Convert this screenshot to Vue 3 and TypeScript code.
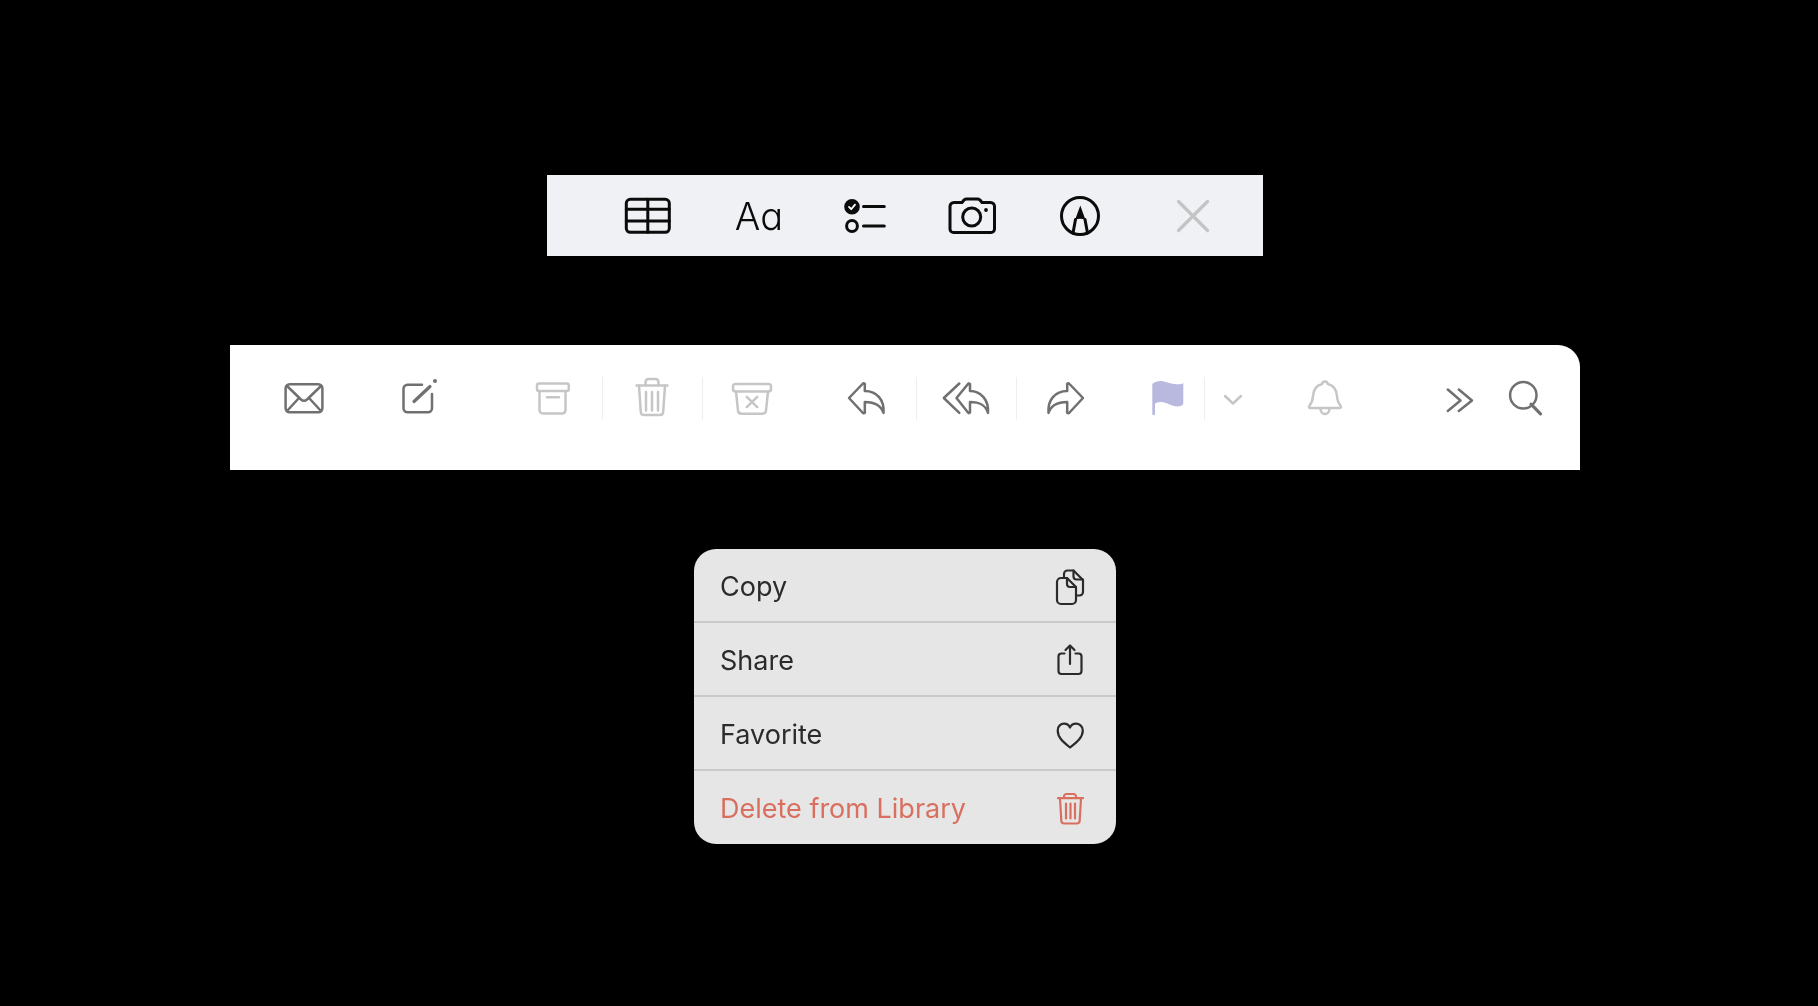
<template>
  <div class="page">
    <div class="note-bar">
      <button class="note-btn first">
        <svg width="48" height="48" viewBox="0 0 48 48" class="line dark-black">
          <rect x="2.3" y="7.3" width="43" height="33" rx="4" />
          <path d="M2.3 17.3H45.3M2.3 29H45.3M23.8 7.3V40.3" />
        </svg>
      </button>
      <button class="note-btn aa">Aa</button>
      <button class="note-btn check">
        <svg width="48" height="48" viewBox="0 0 48 48" class="line dark-black">
          <circle cx="11" cy="14.8" r="6.3" class="black-fill" />
          <path d="M8 14.9l2.2 2.3 3.8-4.6" class="white-stroke" />
          <circle cx="11" cy="34" r="5.4" />
          <path d="M22.5 14.5H43.3M22.5 34H43.3" />
        </svg>
      </button>
      <button class="note-btn cam">
        <svg width="48" height="48" viewBox="0 0 48 48" class="line dark-black">
          <path d="M6 10.5H14L16 8Q17 7 19 7H29Q31 7 32 8L34 10.5H42.5a4 4 0 0 1 4 4V37a3.5 3.5 0 0 1-3.5 3.5H5.5A3.5 3.5 0 0 1 2 37V14.5a4 4 0 0 1 4-4Z" />
          <circle cx="23.7" cy="25" r="9" />
          <circle cx="38" cy="18" r="1.9" class="black-fill no-stroke" />
        </svg>
      </button>
      <button class="note-btn pen">
        <svg width="48" height="48" viewBox="0 0 48 48" class="line dark-black">
          <circle cx="24" cy="24" r="18.5" />
          <path d="M24.3 13.5L19 28Q24.3 25.5 29.5 28Z" class="black-fill no-stroke" />
          <path d="M19.5 27.5L17 41M29 27.5L31.5 41" />
        </svg>
      </button>
      <button class="note-btn close">
        <svg width="48" height="48" viewBox="0 0 48 48" class="line">
          <path d="M9.5 9.5L38.5 38.5M38.5 9.5L9.5 38.5" />
        </svg>
      </button>
    </div>

    <div class="mail-bar">
      <button class="mail-btn">
        <svg width="48" height="48" viewBox="0 0 48 48" class="line grey">
          <rect x="5.6" y="9.2" width="36.8" height="28" rx="4" />
          <path d="M7 11L21 24.5Q24 27 27 24.5L41 11M7 36L18.5 23.5M41 36L29.5 23.5" />
        </svg>
      </button>
      <button class="mail-btn gap-14">
        <svg width="48" height="48" viewBox="0 0 48 48" class="line grey">
          <path d="M28 9.8H13.5a4 4 0 0 0-4 4v19.5a4 4 0 0 0 4 4H34a4 4 0 0 0 4-4V19" />
          <path d="M20 26.5L36 11.5" class="thick" />
          <circle cx="41" cy="6" r="2" class="solid" />
        </svg>
      </button>

      <div class="group gap-34">
        <button class="mail-btn sep">
          <svg width="48" height="48" viewBox="0 0 48 48" class="line off">
            <rect x="9" y="8.5" width="31.8" height="7.5" rx="2" />
            <path d="M11.5 16V35a3.5 3.5 0 0 0 3.5 3.5H34.5a3.5 3.5 0 0 0 3-3.5V16M19 22.2H31" />
          </svg>
        </button>
        <button class="mail-btn sep">
          <svg width="48" height="48" viewBox="0 0 48 48" class="line off">
            <path d="M8.5 10.5H39.5M17.5 10.5V7a3 3 0 0 1 3-3h7a3 3 0 0 1 3 3v3.5" />
            <path d="M11 10.5l1.8 26.5a3.2 3.2 0 0 0 3.2 3H32a3.2 3.2 0 0 0 3.2-3L37 10.5" />
            <path d="M18 17V35.5M24 17V35.5M30 17V35.5" />
          </svg>
        </button>
        <button class="mail-btn">
          <svg width="48" height="48" viewBox="0 0 48 48" class="line off">
            <rect x="5" y="9" width="38" height="7.5" rx="2.5" />
            <path d="M8 16.5L10 35.5a3.5 3.5 0 0 0 3.5 3.2H34.5a3.5 3.5 0 0 0 3.5-3.2L40 16.5M18.8 21.8L29.2 32.2M29.2 21.8L18.8 32.2" />
          </svg>
        </button>
      </div>

      <div class="group gap-14">
        <button class="mail-btn sep">
          <svg width="48" height="48" viewBox="0 0 48 48" class="line grey">
            <path :d="replyPath" />
          </svg>
        </button>
        <button class="mail-btn sep">
          <svg width="48" height="48" viewBox="0 0 48 48" class="line grey">
            <path d="M17.3 8.5L1.8 23L17.3 37.8" />
            <path d="M14.5 23L26 9a1 1 0 0 1 2 1V16C39 16 47 25 46 38C43.5 30 38 27 28 27V36.5a1 1 0 0 1-2 1Z" />
          </svg>
        </button>
        <button class="mail-btn">
          <svg width="48" height="48" viewBox="0 0 48 48" class="line grey">
            <path :d="replyPath" transform="matrix(-1 0 0 1 48 0)" />
          </svg>
        </button>
      </div>

      <div class="group gap-16">
        <button class="mail-btn flag sep">
          <svg width="48" height="48" viewBox="0 0 48 48">
            <path d="M8.3 9C12 6 16 5.5 20 6.5C26 8 32 11 39.3 8.2V28q0 2-2 2.7C31 33 26 29 20 27.5C17 26.8 14 27 11 28.5V39a1.35 1.35 0 0 1-2.7 0Z" fill="#b9b9e0" />
          </svg>
        </button>
        <button class="mail-btn small gap-1">
          <svg width="48" height="48" viewBox="0 0 48 48" class="line off">
            <path d="M16 21L24 28.5L32 21" />
          </svg>
        </button>
      </div>

      <button class="mail-btn gap-15">
        <svg width="48" height="48" viewBox="0 0 48 48" class="line off">
          <path d="M24 6.5c-1.5 0-2.5 1-3 2.5C15 10.5 12.5 15 12 21C11.7 26 10 29 8.3 31c-.7 1 0 2 1 2H38.7c1 0 1.7-1 1-2C38 29 36.3 26 36 21C35.5 15 33 10.5 27 9C26.5 7.5 25.5 6.5 24 6.5Z" />
          <path d="M19.5 33.5a4.5 5.5 0 0 0 9 0" />
        </svg>
      </button>

      <button class="mail-btn small gap-57">
        <svg width="48" height="48" viewBox="0 0 48 48" class="line grey">
          <path d="M11.8 14.5L24.5 25.5L11.8 36M22.8 14.5L36 25.5L22.8 36" />
        </svg>
      </button>
      <button class="mail-btn small gap-10">
        <svg width="48" height="48" viewBox="0 0 48 48" class="line grey">
          <circle cx="22.3" cy="20.3" r="13.2" />
          <path d="M30 29.2L39.5 38.8" class="thick" />
        </svg>
      </button>
    </div>

    <ul class="menu">
      <li v-for="item in menuItems" :key="item.label" class="menu-row" :class="{ danger: item.danger }">
        <span class="menu-label">{{ item.label }}</span>
        <svg width="40" height="40" viewBox="0 0 40 40" class="menu-icon">
          <path v-for="d in item.paths" :key="d" :d="d" />
        </svg>
      </li>
    </ul>
  </div>
</template>

<script setup lang="ts">
interface MenuItem {
  label: string
  danger?: boolean
  paths: string[]
}

const replyPath =
  'M7 23L20.5 9a1 1 0 0 1 2.3 1V16C35 16 42.5 25 41.5 38C39 30 33 27 22.8 27V36.5a1 1 0 0 1-2.3 1Z'

const menuItems: MenuItem[] = [
  {
    label: 'Copy',
    paths: [
      'M7 16a4 4 0 0 1 4-4h6l9 9v13a4 4 0 0 1-4 4H11a4 4 0 0 1-4-4Z',
      'M17 12v6a3 3 0 0 0 3 3h6',
      'M14 12V8a3.5 3.5 0 0 1 3.5-3.5h6l9.5 9.5V26a3.5 3.5 0 0 1-3.5 3.5H26',
      'M23.5 4.5v6a3 3 0 0 0 3 3H33',
    ],
  },
  {
    label: 'Share',
    paths: [
      'M14.5 13.5H11.5a3 3 0 0 0-3 3V31a3 3 0 0 0 3 3H28.5a3 3 0 0 0 3-3V16.5a3 3 0 0 0-3-3H25.5',
      'M20 5.5V24M15.5 10L20 5.5L24.5 10',
    ],
  },
  {
    label: 'Favorite',
    paths: [
      'M20 33.5C13 28 7.7 23.5 7.7 16.5C7.7 12 11 9.7 14 9.7C16.5 9.7 18.8 11 20 13.5C21.2 11 23.5 9.7 26 9.7C29 9.7 32.8 12 32.8 16.5C32.8 23.5 27 28 20 33.5Z',
    ],
  },
  {
    label: 'Delete from Library',
    danger: true,
    paths: [
      'M8 9.2H33M14 9.2V7.5a2.5 2.5 0 0 1 2.5-2.5h7a2.5 2.5 0 0 1 2.5 2.5V9.2',
      'M10 9.2L11.3 31.5a3 3 0 0 0 3 3H26.7a3 3 0 0 0 3-3L31 9.2',
      'M16 14.5V29.5M20.5 14.5V29.5M25 14.5V29.5',
    ],
  },
]
</script>

<style>
html,
body {
  background: #000;
}
</style>

<style scoped>
.page {
  box-sizing: border-box;
  width: 1818px;
  height: 1006px;
  padding: 175px 8px 0 0;
  display: flex;
  flex-direction: column;
  align-items: center;
  background: #000;
  overflow: hidden;
  font-family: Inter, "Liberation Sans", sans-serif;
  /* the source is a video frame, everything is a touch soft */
  filter: blur(0.5px);
}

button {
  appearance: none;
  border: 0;
  margin: 0;
  padding: 0;
  background: none;
  display: flex;
  align-items: center;
  justify-content: center;
}

svg {
  display: block;
  flex: none;
  overflow: visible;
}

.line {
  fill: none;
  stroke-linecap: round;
  stroke-linejoin: round;
  stroke-width: 2.5;
}

.dark-black {
  stroke: #0b0b0b;
  stroke-width: 3;
}

.black-fill {
  fill: #0b0b0b;
}

.no-stroke {
  stroke: none;
}

.white-stroke {
  stroke: #fff;
  stroke-width: 1.8;
}

.grey {
  stroke: #707070;
}

.off {
  stroke: #c6c6c6;
}

.thick {
  stroke-width: 3.2;
}

.solid {
  fill: #707070;
  stroke: none;
}

/* top bar */
.note-bar {
  box-sizing: border-box;
  width: 716px;
  height: 81px;
  padding-left: 51px;
  display: flex;
  align-items: center;
  background: #f0f1f5;
}

.note-btn {
  width: 100px;
  height: 48px;
}

.aa {
  margin-left: 11px;
  font-family: Inter, "Liberation Sans", sans-serif;
  font-size: 38px;
  font-weight: 350;
  font-feature-settings: "cv11";
  color: #0b0b0b;
  line-height: 48px;
}

.check {
  margin-left: 6px;
}

.cam {
  margin-left: 7px;
}

.pen {
  margin-left: 8px;
}

.close {
  margin-left: 13px;
}

.close .line {
  stroke: #c4c4c6;
  stroke-width: 3.2;
}

/* mail toolbar */
.mail-bar {
  box-sizing: border-box;
  width: 1350px;
  height: 125px;
  margin-top: 89px;
  padding: 32px 0 0 24px;
  display: flex;
  align-items: flex-start;
  background: #fff;
  border-top-right-radius: 22px;
}

.group {
  display: flex;
}

.mail-btn {
  width: 100px;
  height: 43px;
}

.mail-btn.flag {
  width: 72px;
}

.mail-btn.small {
  width: 55px;
}

.sep {
  box-shadow: 1px 0 0 #eeeeee;
}

.gap-1 {
  margin-left: 1px;
}

.gap-10 {
  margin-left: 10px;
}

.gap-14 {
  margin-left: 14px;
}

.gap-15 {
  margin-left: 15px;
}

.gap-16 {
  margin-left: 16px;
}

.gap-34 {
  margin-left: 34px;
}

.gap-57 {
  margin-left: 57px;
}

/* context menu */
.menu {
  list-style: none;
  width: 422px;
  margin: 79px 0 0;
  padding: 0;
  background: #e6e6e6;
  border-radius: 22px;
  overflow: hidden;
}

.menu-row {
  box-sizing: border-box;
  height: 74px;
  padding: 2px 26px 0 26px;
  display: flex;
  align-items: center;
  justify-content: space-between;
  border-bottom: 2px solid #c9c9c9;
  color: #2b2b2b;
}

.menu-label {
  font-size: 27px;
}

.menu-row:last-child {
  height: 73px;
  border-bottom: 0;
}

.menu-icon {
  fill: none;
  stroke: #2b2b2b;
  stroke-width: 2.2;
  stroke-linecap: round;
  stroke-linejoin: round;
}

.danger {
  color: #d9705f;
}

.danger .menu-icon {
  stroke: #d9705f;
}
</style>
